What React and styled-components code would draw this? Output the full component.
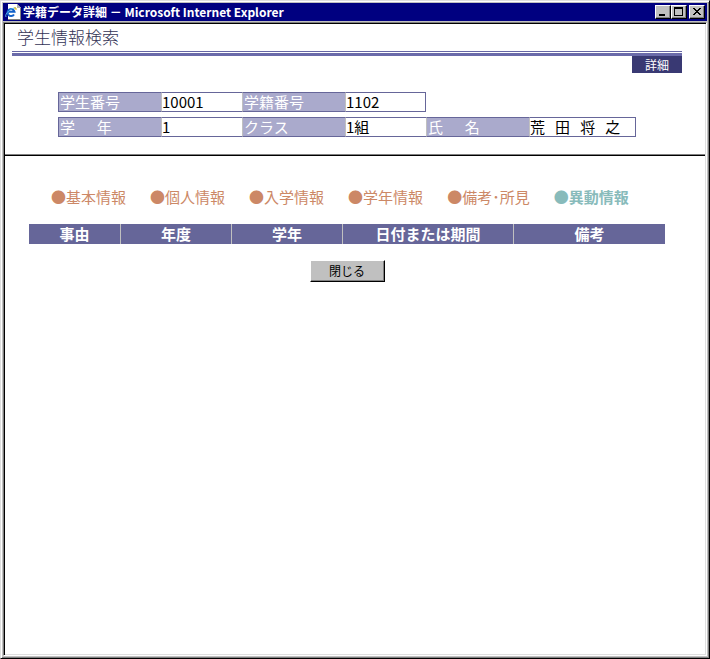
import React from "react";
import styled, { createGlobalStyle } from "styled-components";

const GlobalStyle = createGlobalStyle`
  * { box-sizing: border-box; }
  body {
    margin: 0;
    background: #c0c0c0;
    color: #000;
    font-family: "Noto Sans CJK JP", sans-serif;
    font-size: 15px;
    line-height: 18px;
  }
`;

const Window = styled.div`
  display: flex;
  flex-direction: column;
  min-height: 100vh;
  padding: 1px;
  background: #c0c0c0;
  border: 1px solid;
  border-color: #dfdfdf #000 #000 #dfdfdf;
  box-shadow: inset 1px 1px #fff, inset -1px -1px #808080;
`;

const TitleBar = styled.header`
  display: flex;
  align-items: center;
  height: 18px;
  margin: 1px;
  padding: 0 2px;
  background: #000080;
  color: #fff;
`;

const WindowTitle = styled.div`
  flex: 1;
  padding-left: 2px;
  font-family: "Noto Sans CJK JP", sans-serif;
  font-size: 12px;
  font-weight: 700;
  line-height: 18px;
  white-space: nowrap;
`;

const Controls = styled.div`
  display: flex;
`;

const ControlButton = styled.button`
  width: 16px;
  height: 14px;
  margin-left: ${(p) => (p.$apart ? "2px" : "0")};
  padding: 0;
  background: #c0c0c0;
  border: 1px solid;
  border-color: #fff #000 #000 #fff;
  box-shadow: inset -1px -1px #808080;
  line-height: 0;
`;

const Client = styled.main`
  flex: 1;
  margin: 0 1px 1px 1px;
  background: #fff;
  border: 1px solid;
  border-color: #808080 #fff #fff #808080;
  box-shadow: inset 1px 1px #000, inset -1px -1px #dfdfdf;
  padding: 1px;
`;

const PageHead = styled.div`
  display: flex;
  flex-direction: column;
  margin: 0 23px 0 7px;
`;

const PageTitle = styled.h1`
  margin: 0;
  padding: 0 5px 2px;
  color: #333355;
  font-size: 17px;
  font-weight: 300;
  line-height: 25px;
`;

const DoubleRule = styled.div`
  height: 5px;
  border-top: 1px solid #6666a5;
  border-bottom: 3px solid #6b6baa;
`;

const DetailLabel = styled.div`
  align-self: flex-end;
  width: 50px;
  background: #393973;
  color: #fff;
  font-size: 12px;
  line-height: 17px;
  text-align: center;
`;

const StudentSection = styled.section`
  padding: 14px 53px 13px;
  border-bottom: 1px solid #000;
  box-shadow: inset 0 -1px #808080;
`;

const StudentTable = styled.table`
  border-spacing: 0 5px;
  table-layout: fixed;
  width: 578px;
`;

const StudentLabel = styled.th`
  height: 20px;
  padding: 0 1px;
  background: #aaaacc;
  border: solid #666699;
  border-width: 1px 0 1px 1px;
  border-left-color: #c0c0c0;
  color: #fff;
  font-weight: 400;
  text-align: left;
  white-space: pre;
  &:first-child { border-left-color: #666699; }
`;

const StudentValue = styled.td`
  padding: 0;
  border: solid #666699;
  border-width: 1px 0 1px 1px;
  border-left-color: #c0c0c0;
  font-weight: 400;
  white-space: pre;
  &:last-child { border-right-width: 1px; }
`;

const Tabs = styled.nav`
  display: flex;
  gap: 24px;
  padding: 31px 46px 0;
`;

const Tab = styled.a`
  color: ${(p) => (p.$current ? "#88bbbb" : "#cc8866")};
  font-weight: ${(p) => (p.$current ? 700 : 400)};
  line-height: 20px;
  text-decoration: none;
  white-space: nowrap;
`;

const History = styled.section`
  display: flex;
  flex-direction: column;
  gap: 16px;
  padding: 17px 40px 16px 24px;
`;

const HistoryTable = styled.table`
  width: 100%;
  border-collapse: separate;
  border-spacing: 0;
  table-layout: fixed;
  background: #666699;
`;

const HistoryHead = styled.th`
  width: ${(p) => (p.$width ? `${p.$width}px` : "auto")};
  height: 20px;
  padding: 0;
  color: #fff;
  font-weight: 700;
  border-right: 1px solid #c0c0c0;
  &:last-child { border-right: 0; }
`;

const CloseButton = styled.button`
  align-self: center;
  width: 75px;
  height: 22px;
  padding: 0;
  background: #c0c0c0;
  border: 1px solid;
  border-color: #fff #000 #000 #fff;
  box-shadow: inset -1px -1px #808080;
  color: #000;
  font-family: inherit;
  font-size: 12px;
  line-height: 18px;
`;

const DocumentIcon = () => (
  <svg width="16" height="16" viewBox="0 0 16 16" aria-hidden="true">
    <path d="M3 0h9l4 4v12H3z" fill="#fff" />
    <path d="M15 4h1v12H3v-1h12z" fill="#808080" />
    <path d="M12 0l4 4h-4z" fill="#b0b0b0" />
    <path d="M9 10.500A3.500 3.500 0 1 1 9.500 7.800H3.500" fill="none" stroke="#1261c9" strokeWidth="2" />
    <path d="M1 13C-1 10 7 3 11 4" fill="none" stroke="#52b5ef" strokeWidth="1" />
    <path d="M9 4h2v2" fill="none" stroke="#e8b800" strokeWidth="1" />
  </svg>
);

const shapes = {
  最小化: <path d="M3 8h6v2H3z" />,
  最大化: <path d="M2 1h9v9H2zM3 3v6h7V3z" fillRule="evenodd" />,
  閉じる: <path d="M3 2h2v1h1v1h2V3h1V2h2v1h-1v1H9v1H8v1h1v1h1v1h1v1H9V8H8V7H6v1H5v1H3V8h1V7h1V6h1V5H5V4H4V3H3z" />,
};

const historyColumns = [
  ["事由", 92],
  ["年度", 111],
  ["学年", 111],
  ["日付または期間", 171],
  ["備考"],
];

const tabs = ["基本情報", "個人情報", "入学情報", "学年情報", "備考･所見", "異動情報"];

export default function App() {
  return (
    <>
      <GlobalStyle />
      <Window>
        <TitleBar>
          <DocumentIcon />
          <WindowTitle>学籍データ詳細 － Microsoft Internet Explorer</WindowTitle>
          <Controls>
            {Object.entries(shapes).map(([name, shape]) => (
              <ControlButton key={name} type="button" aria-label={name} $apart={name === "閉じる"}>
                <svg width="14" height="12" viewBox="0 0 14 12" shapeRendering="crispEdges">{shape}</svg>
              </ControlButton>
            ))}
          </Controls>
        </TitleBar>
        <Client>
          <PageHead>
            <PageTitle>学生情報検索</PageTitle>
            <DoubleRule />
            <DetailLabel>詳細</DetailLabel>
          </PageHead>
          <StudentSection>
            <StudentTable>
              <colgroup>
                <col width="103" />
                <col width="81" />
                <col width="103" />
                <col width="81" />
                <col width="103" />
                <col width="107" />
              </colgroup>
              <tbody>
                <tr>
                  <StudentLabel scope="row">学生番号</StudentLabel>
                  <StudentValue>10001</StudentValue>
                  <StudentLabel scope="row">学籍番号</StudentLabel>
                  <StudentValue>1102</StudentValue>
                </tr>
                <tr>
                  <StudentLabel scope="row">{"学　  年"}</StudentLabel>
                  <StudentValue>1</StudentValue>
                  <StudentLabel scope="row">クラス</StudentLabel>
                  <StudentValue>1組</StudentValue>
                  <StudentLabel scope="row">{"氏　  名"}</StudentLabel>
                  <StudentValue>{"荒   田   将   之"}</StudentValue>
                </tr>
              </tbody>
            </StudentTable>
          </StudentSection>
          <Tabs>
            {tabs.map((name) => (
              <Tab key={name} href="#" $current={name === "異動情報"}>●{name}</Tab>
            ))}
          </Tabs>
          <History>
            <HistoryTable>
              <thead>
                <tr>
                  {historyColumns.map(([name, width]) => (
                    <HistoryHead key={name} scope="col" $width={width}>{name}</HistoryHead>
                  ))}
                </tr>
              </thead>
            </HistoryTable>
            <CloseButton type="button">閉じる</CloseButton>
          </History>
        </Client>
      </Window>
    </>
  );
}
